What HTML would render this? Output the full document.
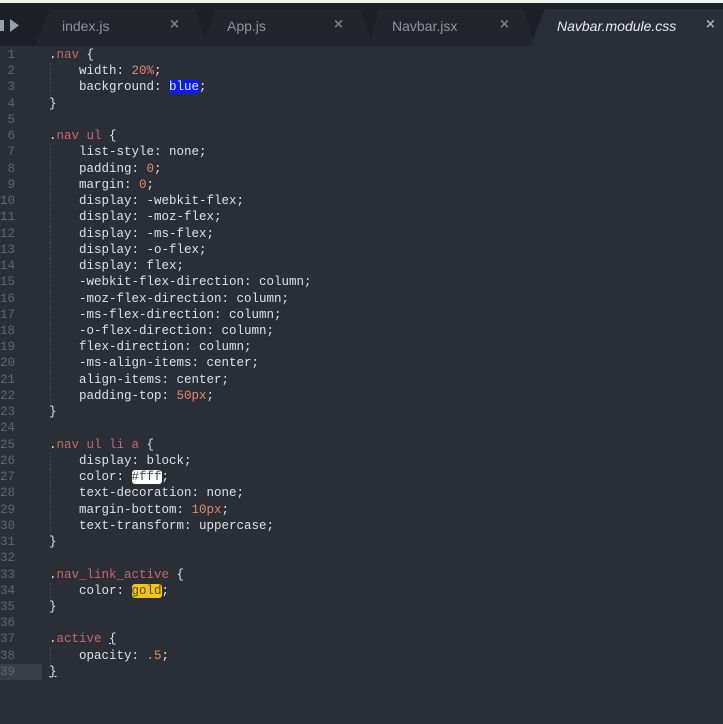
<!DOCTYPE html>
<html><head><meta charset="utf-8"><style>
html,body{margin:0;padding:0;}
body{width:723px;height:724px;background:#2a2e37;position:relative;overflow:hidden;font-family:"Liberation Mono",monospace;}
.top{position:absolute;left:0;top:0;width:723px;height:3px;background:#f2f2f2;}
.bar{position:absolute;left:0;top:3px;width:723px;height:43px;background:#1c1f25;}
svg.t{position:absolute;left:0;top:0;}
.tab{position:absolute;top:18px;font-family:"Liberation Sans",sans-serif;font-size:14px;color:#8e939b;}
.x{position:absolute;top:17px;font-family:"DejaVu Sans",sans-serif;font-size:13px;color:#7d828a;font-weight:bold;}
.code{position:absolute;left:0;top:47px;}
.ln{height:16.24px;line-height:16.24px;font-size:12.5px;white-space:pre;position:relative;}
.n{position:absolute;left:0;width:15px;text-align:right;color:#5f6571;}
.c{position:absolute;left:49px;color:#dde1e7;}
.s{color:#c8676c;}
.v{color:#e5876b;}
.g{position:absolute;left:50px;top:0;height:16.24px;border-left:1px dotted #474c57;}
.hl{position:absolute;left:0;top:664px;width:42px;height:16px;background:#3a3f49;}
.bb{background:#0a1df0;color:#e8eaff;border-radius:2px;}
.bw{background:#fff;color:#444;border-radius:3px;}
.bg{background:#f1c40f;color:#5a4a00;border-radius:3px;}
</style></head><body>
<div class="top"></div>
<div class="bar"></div>
<svg class="t" width="723" height="46">
<polygon points="35,46 50,9 195,9 207,46" fill="#22252c"/>
<polygon points="203,46 215,9 360,9 373,46" fill="#22252c"/>
<polygon points="369,46 379,9 523,9 536,46" fill="#22252c"/>
<polygon points="530,46 545,9 723,9 723,46" fill="#2a2e37"/>
<polygon points="0,20 0,31 4,31 4,20" fill="#9aa0a8"/>
<polygon points="10,19 19,25.5 10,32" fill="#9aa0a8"/>
</svg>
<div class="tab" style="left:62px">index.js</div><div class="x" style="left:169px">×</div>
<div class="tab" style="left:227px">App.js</div><div class="x" style="left:333px">×</div>
<div class="tab" style="left:392px">Navbar.jsx</div><div class="x" style="left:499px">×</div>
<div class="tab" style="left:557px;color:#e8eaee;font-style:italic">Navbar.module.css</div><div class="x" style="left:705px;color:#b0b4ba">×</div>
<div class="hl"></div>
<div class="code">
<div class="ln"><span class="n">1</span><span class="c">.<span class="s">nav</span> {</span></div>
<div class="ln"><span class="n">2</span><span class="g"></span><span class="c">    width: <span class="v">20%</span>;</span></div>
<div class="ln"><span class="n">3</span><span class="g"></span><span class="c">    background: <span class="bb">blue</span>;</span></div>
<div class="ln"><span class="n">4</span><span class="c">}</span></div>
<div class="ln"><span class="n">5</span></div>
<div class="ln"><span class="n">6</span><span class="c">.<span class="s">nav ul</span> {</span></div>
<div class="ln"><span class="n">7</span><span class="g"></span><span class="c">    list-style: none;</span></div>
<div class="ln"><span class="n">8</span><span class="g"></span><span class="c">    padding: <span class="v">0</span>;</span></div>
<div class="ln"><span class="n">9</span><span class="g"></span><span class="c">    margin: <span class="v">0</span>;</span></div>
<div class="ln"><span class="n">10</span><span class="g"></span><span class="c">    display: -webkit-flex;</span></div>
<div class="ln"><span class="n">11</span><span class="g"></span><span class="c">    display: -moz-flex;</span></div>
<div class="ln"><span class="n">12</span><span class="g"></span><span class="c">    display: -ms-flex;</span></div>
<div class="ln"><span class="n">13</span><span class="g"></span><span class="c">    display: -o-flex;</span></div>
<div class="ln"><span class="n">14</span><span class="g"></span><span class="c">    display: flex;</span></div>
<div class="ln"><span class="n">15</span><span class="g"></span><span class="c">    -webkit-flex-direction: column;</span></div>
<div class="ln"><span class="n">16</span><span class="g"></span><span class="c">    -moz-flex-direction: column;</span></div>
<div class="ln"><span class="n">17</span><span class="g"></span><span class="c">    -ms-flex-direction: column;</span></div>
<div class="ln"><span class="n">18</span><span class="g"></span><span class="c">    -o-flex-direction: column;</span></div>
<div class="ln"><span class="n">19</span><span class="g"></span><span class="c">    flex-direction: column;</span></div>
<div class="ln"><span class="n">20</span><span class="g"></span><span class="c">    -ms-align-items: center;</span></div>
<div class="ln"><span class="n">21</span><span class="g"></span><span class="c">    align-items: center;</span></div>
<div class="ln"><span class="n">22</span><span class="g"></span><span class="c">    padding-top: <span class="v">50px</span>;</span></div>
<div class="ln"><span class="n">23</span><span class="c">}</span></div>
<div class="ln"><span class="n">24</span></div>
<div class="ln"><span class="n">25</span><span class="c">.<span class="s">nav ul li a</span> {</span></div>
<div class="ln"><span class="n">26</span><span class="g"></span><span class="c">    display: block;</span></div>
<div class="ln"><span class="n">27</span><span class="g"></span><span class="c">    color: <span class="bw">#fff</span>;</span></div>
<div class="ln"><span class="n">28</span><span class="g"></span><span class="c">    text-decoration: none;</span></div>
<div class="ln"><span class="n">29</span><span class="g"></span><span class="c">    margin-bottom: <span class="v">10px</span>;</span></div>
<div class="ln"><span class="n">30</span><span class="g"></span><span class="c">    text-transform: uppercase;</span></div>
<div class="ln"><span class="n">31</span><span class="c">}</span></div>
<div class="ln"><span class="n">32</span></div>
<div class="ln"><span class="n">33</span><span class="c">.<span class="s">nav_link_active</span> {</span></div>
<div class="ln"><span class="n">34</span><span class="g"></span><span class="c">    color: <span class="bg">gold</span>;</span></div>
<div class="ln"><span class="n">35</span><span class="c">}</span></div>
<div class="ln"><span class="n">36</span></div>
<div class="ln"><span class="n">37</span><span class="c">.<span class="s">active</span> <u>{</u></span></div>
<div class="ln"><span class="n">38</span><span class="g"></span><span class="c">    opacity: <span class="v">.5</span>;</span></div>
<div class="ln"><span class="n">39</span><span class="c"><u>}</u></span></div>
</div>
</body></html>
